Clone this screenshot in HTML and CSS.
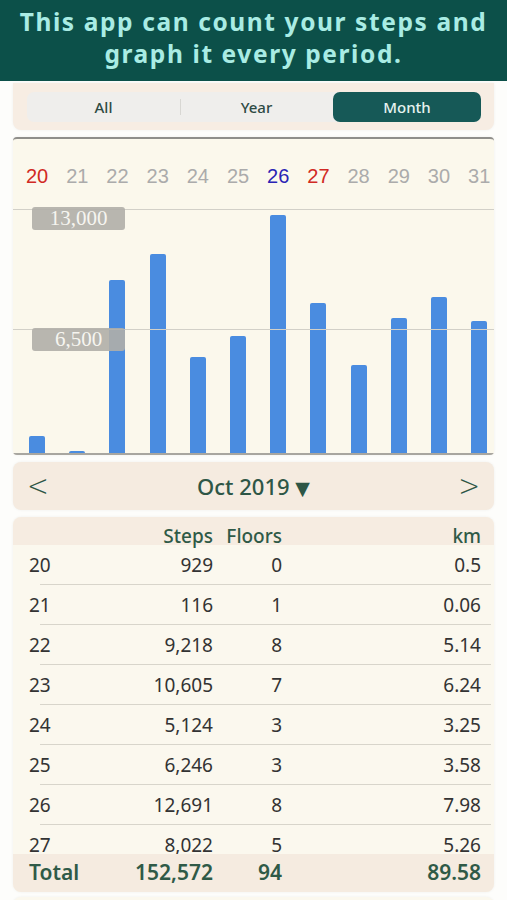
FILE: index.html
```html
<!DOCTYPE html>
<html lang="en">
<head>
<meta charset="UTF-8">
<meta name="viewport" content="width=device-width, initial-scale=1.0">
<title>Step Counter</title>
<link rel="stylesheet" href="styles.css">
</head>
<body>

<div class="banner">
    <p>This app can count your steps and<br>graph it every period.</p>
</div>

<div class="panel segbox">
    <div class="segments">
        <div class="seg">All</div>
        <div class="seg sep">Year</div>
        <div class="seg active">Month</div>
    </div>
</div>

<div class="panel chart">
    <div class="days">
        <span class="sun">20</span><span>21</span><span>22</span><span>23</span><span>24</span><span>25</span>
        <span class="sat">26</span><span class="sun">27</span><span>28</span><span>29</span><span>30</span><span>31</span>
    </div>
    <div class="plot">
        <div class="gridline top"></div>
        <div class="gridline mid"></div>
        <div class="bars">
            <div class="col"><div class="bar" style="height:17px"></div></div>
            <div class="col"><div class="bar" style="height:2px"></div></div>
            <div class="col"><div class="bar" style="height:173px"></div></div>
            <div class="col"><div class="bar" style="height:199px"></div></div>
            <div class="col"><div class="bar" style="height:96px"></div></div>
            <div class="col"><div class="bar" style="height:117px"></div></div>
            <div class="col"><div class="bar" style="height:238px"></div></div>
            <div class="col"><div class="bar" style="height:150px"></div></div>
            <div class="col"><div class="bar" style="height:88px"></div></div>
            <div class="col"><div class="bar" style="height:135px"></div></div>
            <div class="col"><div class="bar" style="height:156px"></div></div>
            <div class="col"><div class="bar" style="height:132px"></div></div>
        </div>
        <div class="tag top">13,000</div>
        <div class="tag mid">6,500</div>
    </div>
</div>

<div class="panel monthnav">
    <span class="arrow">&lt;</span>
    <span class="month">Oct 2019 <span class="caret">&#9660;</span></span>
    <span class="arrow">&gt;</span>
</div>

<div class="panel table">
    <div class="row head">
        <span></span><span class="num">Steps</span><span class="num">Floors</span><span class="num">km</span>
    </div>
    <div class="body">
        <div class="row"><span>20</span><span class="num">929</span><span class="num">0</span><span class="num">0.5</span></div>
        <div class="row"><span>21</span><span class="num">116</span><span class="num">1</span><span class="num">0.06</span></div>
        <div class="row"><span>22</span><span class="num">9,218</span><span class="num">8</span><span class="num">5.14</span></div>
        <div class="row"><span>23</span><span class="num">10,605</span><span class="num">7</span><span class="num">6.24</span></div>
        <div class="row"><span>24</span><span class="num">5,124</span><span class="num">3</span><span class="num">3.25</span></div>
        <div class="row"><span>25</span><span class="num">6,246</span><span class="num">3</span><span class="num">3.58</span></div>
        <div class="row"><span>26</span><span class="num">12,691</span><span class="num">8</span><span class="num">7.98</span></div>
        <div class="row"><span>27</span><span class="num">8,022</span><span class="num">5</span><span class="num">5.26</span></div>
    </div>
    <div class="row total">
        <span>Total</span><span class="num">152,572</span><span class="num">94</span><span class="num">89.58</span>
    </div>
</div>

<div class="panel next"></div>

</body>
</html>
```

FILE: styles.css
```css
body {
    margin: 0;
    background-color: #fdfdfb;
    font-family: "Noto Sans", "Liberation Sans", sans-serif;
    overflow: hidden;
}
.banner {
    height: 81px;
    box-sizing: border-box;
    padding-top: 6px;
    background-color: #0c5049;
    color: #a9ece4;
    display: flex;
    justify-content: center;
}
.banner p {
    margin: 0;
    text-align: center;
    font-size: 24.5px;
    font-weight: 700;
    line-height: 32px;
    letter-spacing: 1.6px;
}
.panel {
    margin: 0 13px;
    border-radius: 8px;
    box-shadow: 0 0 3px rgba(0,0,0,0.06);
}
.segbox {
    margin-top: 2px;
    height: 47px;
    background-color: #f7ede3;
    display: flex;
    align-items: center;
    padding: 0 13px 0 14px;
    border-radius: 0 0 8px 8px;
}
.segments {
    flex: 1;
    height: 30px;
    display: flex;
    background-color: #efeeec;
    border-radius: 7px;
}
.seg {
    flex: 1;
    display: flex;
    align-items: center;
    justify-content: center;
    font-size: 15px;
    font-weight: 500;
    color: #2e4a44;
    position: relative;
}
.seg.sep::before {
    content: "";
    position: absolute;
    left: 0;
    top: 7px;
    bottom: 7px;
    border-left: 1px solid #d8d7d3;
}
.seg.active {
    flex: 0 0 148px;
    background-color: #165957;
    color: #e6f3f0;
    border-radius: 7px;
}
.chart {
    margin-top: 7px;
    height: 316px;
    background-color: #fbf8ec;
    border-top: 2px solid #8f8e8a;
    border-radius: 4px;
    overflow: hidden;
}
.days {
    height: 66px;
    padding-top: 4px;
    display: grid;
    grid-template-columns: repeat(12, 40.2px);
    padding-left: 4px;
    align-items: center;
    font-family: "Liberation Sans", sans-serif;
    font-size: 20px;
    color: #ababab;
}
.days span {
    text-align: center;
}
.days .sun {
    color: #d12a24;
}
.days .sat {
    color: #2a24b5;
}
.plot {
    position: relative;
    height: 244px;
    border-bottom: 2px solid #a8a6a0;
}
.gridline {
    position: absolute;
    left: 0;
    right: 0;
    border-top: 1px solid #d2d0c8;
}
.gridline.top {
    top: 0;
}
.gridline.mid {
    top: 120px;
}
.bars {
    height: 100%;
    display: grid;
    grid-template-columns: repeat(12, 40.2px);
    padding-left: 4px;
}
.col {
    display: flex;
    justify-content: center;
    align-items: flex-end;
}
.bar {
    width: 16px;
    background-color: #4a8ce0;
    border-radius: 2px 2px 0 0;
}
.tag {
    position: absolute;
    left: 19px;
    width: 93px;
    height: 23px;
    border-radius: 3px;
    background-color: rgba(176,174,168,0.9);
    color: #f6f5f0;
    font-family: "Liberation Serif", serif;
    font-size: 21px;
    line-height: 23px;
    text-align: center;
}
.tag.top {
    top: -2px;
}
.tag.mid {
    top: 119px;
}
.monthnav {
    margin-top: 7px;
    height: 48px;
    background-color: #f5ebe0;
    display: flex;
    align-items: center;
    justify-content: space-between;
    padding: 0 14px 0 14px;
    color: #2e5646;
}
.arrow {
    font-family: "DejaVu Sans", sans-serif;
    font-weight: 200;
    font-size: 26px;
    transform: scaleY(1.15);
}
.month {
    font-size: 22px;
    font-weight: 500;
}
.caret {
    font-family: "DejaVu Sans", sans-serif;
    font-size: 19px;
}
.table {
    margin-top: 7px;
    height: 375px;
    background-color: #fbf8ee;
    display: flex;
    flex-direction: column;
    overflow: hidden;
}
.row {
    display: grid;
    grid-template-columns: 100px 84px 69px 1fr;
    padding: 0 13px 0 16px;
    align-items: center;
    font-size: 19px;
    color: #333333;
}
.num {
    text-align: right;
}
.row.head {
    height: 22px;
    background-color: #f6ece1;
    color: #2f5a47;
    font-weight: 500;
    padding-top: 6px;
}
.body {
    flex: 1;
    overflow: hidden;
}
.body .row {
    height: 40px;
    position: relative;
}
.body .row::after {
    content: "";
    position: absolute;
    left: 27px;
    right: 3px;
    bottom: 0;
    border-bottom: 1px solid #d8d5cb;
}
.row.total {
    height: 36px;
    padding-bottom: 2px;
    background-color: #f5ebe0;
    color: #2f5a47;
    font-size: 21px;
    font-weight: 600;
}
.next {
    margin-top: 5px;
    height: 40px;
    background-color: #fbf8ee;
}
```
